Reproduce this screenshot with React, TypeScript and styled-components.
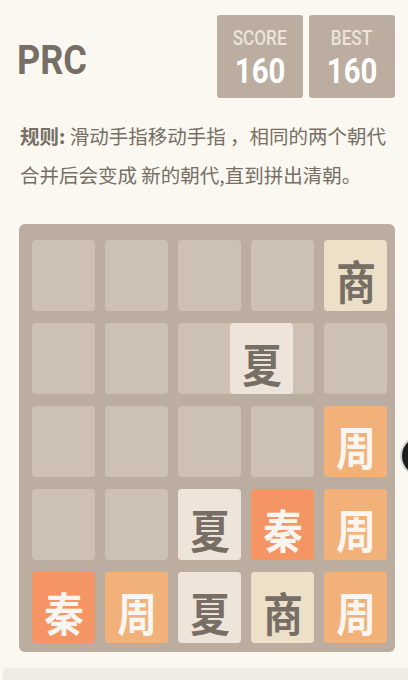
import React from "react";
import styled, { createGlobalStyle } from "styled-components";

const Global = createGlobalStyle`
  html, body { margin: 0; padding: 0; overflow: hidden; }
  body { background: #faf8f0; font-family: Roboto, "Noto Sans CJK SC", sans-serif; }
`;

const Page = styled.div`
  position: relative;
  width: 408px;
  height: 680px;
  overflow: hidden;
  display: flex;
  flex-direction: column;
`;

const Header = styled.header`
  display: flex;
  align-items: center;
  justify-content: space-between;
  padding: 15px 13px 0 19px;
`;

const Title = styled.h1`
  margin: 8px 0 0 -2px;
  font-family: Roboto, sans-serif;
  font-weight: 700;
  font-size: 41px;
  line-height: 1;
  color: #776e65;
  transform: scaleX(0.88);
  transform-origin: left center;
`;

const Scores = styled.div`
  display: flex;
  gap: 6px;
`;

const ScoreBox = styled.div`
  width: 86px;
  height: 83px;
  box-sizing: border-box;
  background: #bbada0;
  border-radius: 3px;
  display: flex;
  flex-direction: column;
  align-items: center;
  padding-top: 14px;
`;

const ScoreLabel = styled.div`
  font-family: Roboto, sans-serif;
  font-weight: 500;
  font-size: 19.5px;
  line-height: 19px;
  color: #eee4da;
  transform: scaleX(0.88);
`;

const ScoreValue = styled.div`
  font-family: Roboto, sans-serif;
  font-weight: 700;
  font-size: 35px;
  line-height: 35px;
  margin-top: 6px;
  color: #ffffff;
  transform: scaleX(0.84);
`;

const Rules = styled.p`
  margin: 19px 0 0 20px;
  font-family: "Noto Sans CJK SC", sans-serif;
  font-size: 19.5px;
  line-height: 38.5px;
  color: #776e65;
`;

const Strong = styled.strong`
  font-weight: 700;
`;

const Board = styled.div`
  position: relative;
  margin: 30px 0 0 19px;
  width: 376px;
  box-sizing: border-box;
  padding: 16px 8px 9px 13px;
  background: #bbada0;
  border-radius: 6px;
`;

const CellGrid = styled.div`
  display: grid;
  grid-template-columns: repeat(5, 62.5px);
  grid-template-rows: repeat(5, 70.5px);
  column-gap: 10.5px;
  row-gap: 12.5px;
`;

const Cell = styled.div`
  background: #cdc1b4;
  border-radius: 4px;
`;

const TileLayer = styled(CellGrid)`
  position: absolute;
  top: 16px;
  left: 13px;
`;

type Kind = "xia" | "shang" | "zhou" | "qin";

const palette: Record<Kind, { bg: string; fg: string }> = {
  xia: { bg: "#eee4da", fg: "#776e65" },
  shang: { bg: "#ede0c8", fg: "#776e65" },
  zhou: { bg: "#f2b179", fg: "#f9f6f2" },
  qin: { bg: "#f59563", fg: "#f9f6f2" },
};

const Tile = styled.div<{ $kind: Kind; $row: number; $col: number; $shift?: number }>`
  grid-row: ${(p) => p.$row};
  grid-column: ${(p) => p.$col};
  margin: 0 -0.5px -0.5px 0;
  background: ${(p) => palette[p.$kind].bg};
  color: ${(p) => palette[p.$kind].fg};
  border-radius: 4px;
  display: flex;
  align-items: center;
  justify-content: center;
  transform: translateX(${(p) => p.$shift ?? 0}px);
`;

const Glyph = styled.span`
  font-family: "Noto Sans CJK SC", sans-serif;
  font-weight: 700;
  font-size: 46px;
  line-height: 1;
  padding-top: 6px;
  transform: scaleX(0.86);
`;

const Footer = styled.div`
  margin: 16px 0 0 3px;
  height: 40px;
  background: #efece5;
  border-top-left-radius: 4px;
`;

const FloatButton = styled.div`
  position: absolute;
  left: 400px;
  top: 435px;
  width: 42px;
  height: 42px;
  box-sizing: border-box;
  border-radius: 50%;
  background: #1e1e1e;
  border: 2px solid #d4d4d4;
`;

const chars: Record<Kind, string> = { xia: "夏", shang: "商", zhou: "周", qin: "秦" };

const tiles: { kind: Kind; row: number; col: number; shift?: number }[] = [
  { kind: "shang", row: 1, col: 5 },
  { kind: "xia", row: 2, col: 4, shift: -21 },
  { kind: "zhou", row: 3, col: 5 },
  { kind: "xia", row: 4, col: 3 },
  { kind: "qin", row: 4, col: 4 },
  { kind: "zhou", row: 4, col: 5 },
  { kind: "qin", row: 5, col: 1 },
  { kind: "zhou", row: 5, col: 2 },
  { kind: "xia", row: 5, col: 3 },
  { kind: "shang", row: 5, col: 4 },
  { kind: "zhou", row: 5, col: 5 },
];

export default function App() {
  return (
    <Page>
      <Global />
      <Header>
        <Title>PRC</Title>
        <Scores>
          <ScoreBox>
            <ScoreLabel>SCORE</ScoreLabel>
            <ScoreValue>160</ScoreValue>
          </ScoreBox>
          <ScoreBox>
            <ScoreLabel>BEST</ScoreLabel>
            <ScoreValue>160</ScoreValue>
          </ScoreBox>
        </Scores>
      </Header>
      <Rules>
        <Strong>规则:</Strong> 滑动手指移动手指 ，相同的两个朝代
        <br />
        合并后会变成 新的朝代,直到拼出清朝。
      </Rules>
      <Board>
        <CellGrid>
          {Array.from({ length: 25 }, (_, i) => (
            <Cell key={i} />
          ))}
        </CellGrid>
        <TileLayer>
          {tiles.map((t, i) => (
            <Tile key={i} $kind={t.kind} $row={t.row} $col={t.col} $shift={t.shift}>
              <Glyph>{chars[t.kind]}</Glyph>
            </Tile>
          ))}
        </TileLayer>
      </Board>
      <Footer />
      <FloatButton />
    </Page>
  );
}
